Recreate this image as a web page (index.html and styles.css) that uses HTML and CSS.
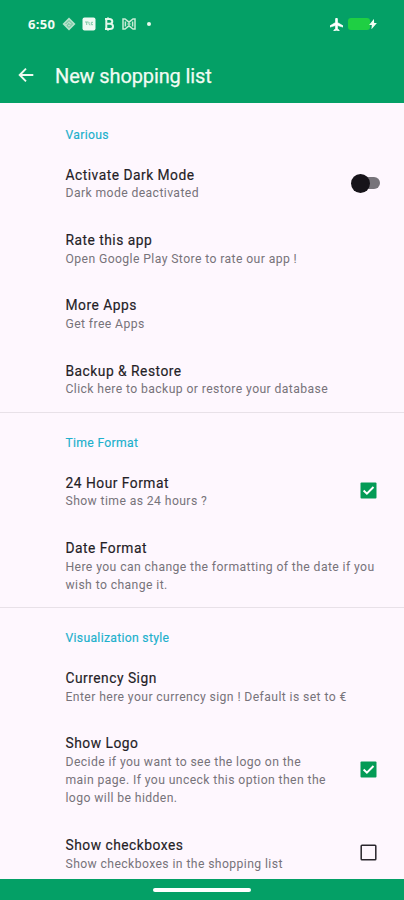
FILE: index.html
```
<!DOCTYPE html>
<html lang="en">
<head>
<meta charset="utf-8">
<title>New shopping list</title>
<link rel="stylesheet" href="styles.css">
</head>
<body>
<div class="screen">
  <header class="header">
    <div class="status">
      <span class="clock">6:50</span>
      <svg class="ic-diamond" width="14" height="14" viewBox="0 0 14 14"><path d="M7 .5 13.5 7 7 13.5 .5 7z" fill="#b5e2ca"/><path d="M3.500 7 7 3.500 10.500 7 7 10.500 5 8.500 7 6.600l1.300 1.300" fill="none" stroke="#4cb286" stroke-width=".8"/></svg>
      <svg class="ic-app" width="14" height="14" viewBox="0 0 14 14"><rect x=".5" y=".5" width="13" height="13" rx="2" fill="#effaf2"/><path d="M3 5h3.5M4.7 5v3M7 5v1.5q0 1.5 1.3 1.5M11 5.3H9.3v2.4H11" fill="none" stroke="#7fc9a5" stroke-width="1"/></svg>
      <svg class="ic-b" width="10" height="14" viewBox="0 0 10 14"><path d="M1 2h4.3Q8.3 2 8.3 4.5 8.3 6.4 6.3 6.8 9 7.2 9 9.5 9 12 5.8 12H1M2.3 2v10M3 6.8h3.3M4 .5V2M4 12v1.5" fill="none" stroke="#e4f7e9" stroke-width="2"/></svg>
      <svg class="ic-m" width="14" height="12" viewBox="0 0 14 12"><path d="M1 1h2l4 3.2L11 1h2v10h-2L7 7.8 3 11H1zM3.4 3.5v5M10.6 3.5v5M5.5 6h3" fill="none" stroke="#c8ecd5" stroke-width="1.500"/></svg>
      <span class="dot"></span>
      <svg class="ic-plane" width="13" height="13" viewBox="2 2 20 20"><path d="M22 16v-2l-8.500-5V3.500c0-.83-.67-1.500-1.500-1.500s-1.500.67-1.500 1.500V9L2 14v2l8.500-2.500V19L8 20.500V22l4-1 4 1v-1.500L13.500 19v-5.500z" fill="#fff" stroke="#fff" stroke-width="1"/></svg>
      <span class="battery"></span>
      <svg class="ic-bolt" width="8" height="10" viewBox="0 0 8 10"><path d="M4.400 1.500 1.300 5.500h2.200L3.200 8.500 6.600 4.500H4.600z" fill="#f1fff3" stroke="#f1fff3" stroke-width="1.200"/></svg>
    </div>
    <div class="appbar">
      <svg width="16" height="16" viewBox="0 0 16 16"><path d="M15.300 8H1.800M8 1.700 1.700 8 8 14.300" fill="none" stroke="#eefaf0" stroke-width="1.900"/></svg>
      <h1 class="title">New shopping list</h1>
    </div>
  </header>
  <main class="content">
    <section class="group">
      <h2 class="category">Various</h2>
      <div class="row"><div class="text"><div class="name">Activate Dark Mode</div><div class="summary">Dark mode deactivated</div></div><span class="switch"><span class="thumb"></span></span></div>
      <div class="row"><div class="text"><div class="name">Rate this app</div><div class="summary">Open Google Play Store to rate our app !</div></div></div>
      <div class="row"><div class="text"><div class="name">More Apps</div><div class="summary">Get free Apps</div></div></div>
      <div class="row"><div class="text"><div class="name">Backup &amp; Restore</div><div class="summary">Click here to backup or restore your database</div></div></div>
    </section>
    <section class="group">
      <h2 class="category">Time Format</h2>
      <div class="row"><div class="text"><div class="name">24 Hour Format</div><div class="summary">Show time as 24 hours ?</div></div><svg class="check" width="17" height="17" viewBox="0 0 17 17"><rect x=".5" y=".5" width="16" height="16" rx="1" fill="#049b56"/><path d="M3.600 8.500 6.900 11.700 13.500 5" fill="none" stroke="#fff" stroke-width="2"/></svg></div>
      <div class="row"><div class="text"><div class="name">Date Format</div><div class="summary">Here you can change the formatting of the date if you<br>wish to change it.</div></div></div>
    </section>
    <section class="group">
      <h2 class="category">Visualization style</h2>
      <div class="row"><div class="text"><div class="name">Currency Sign</div><div class="summary">Enter here your currency sign ! Default is set to €</div></div></div>
      <div class="row"><div class="text"><div class="name">Show Logo</div><div class="summary">Decide if you want to see the logo on the<br>main page. If you unceck this option then the<br>logo will be hidden.</div></div><svg class="check" width="17" height="17" viewBox="0 0 17 17"><rect x=".5" y=".5" width="16" height="16" rx="1" fill="#049b56"/><path d="M3.600 8.500 6.900 11.700 13.500 5" fill="none" stroke="#fff" stroke-width="2"/></svg></div>
      <div class="row"><div class="text"><div class="name">Show checkboxes</div><div class="summary">Show checkboxes in the shopping list</div></div><svg class="check" width="17" height="17" viewBox="0 0 17 17"><rect x="1.200" y="1.200" width="14.600" height="14.600" rx=".8" fill="none" stroke="#29262c" stroke-width="1.500"/></svg></div>
    </section>
  </main>
  <footer class="navbar"><span class="handle"></span></footer>
</div>
</body>
</html>
```
FILE: styles.css
```
* { box-sizing: border-box; }
body { margin: 0; font-family: Roboto, "Liberation Sans", sans-serif; }
.screen { width: 404px; height: 900px; display: flex; flex-direction: column; overflow: hidden; background: #fef7fe; }
.header { height: 103px; flex: none; background: #04a066; color: #f1fbf3; }
.status { height: 47px; display: flex; align-items: center; padding: 1px 27px 0 28px; }
.clock { width: 28px; font: 700 13px/16px "Open Sans", sans-serif; letter-spacing: 0.3px; white-space: nowrap; }
.ic-diamond { margin-left: 6px; }
.ic-app { margin-left: 6px; }
.ic-b { margin-left: 8px; }
.ic-m { margin-left: 8px; }
.dot { width: 4px; height: 4px; margin-left: 11px; border-radius: 50%; background: #e9f9ed; }
.ic-plane { margin-left: auto; }
.battery { width: 22px; height: 12px; margin-left: 5px; border-radius: 3px; background: #1fcf43; }
.ic-bolt { margin-left: -1px; }
.appbar { height: 56px; display: flex; align-items: center; padding: 0 18px; gap: 21px; }
.title { margin: 2px 0 0; font-size: 20px; font-weight: 400; line-height: 26px; letter-spacing: -0.13px; white-space: nowrap; -webkit-text-stroke: 0.25px currentColor; }
.content { flex: 1; min-height: 0; overflow: hidden; padding-top: 1px; }
.group + .group { border-top: 1px solid #e8e1e8; }
.group + .group .category { margin-top: -1px; }
.category { height: 46.500px; margin: 0; padding: 22px 0 0 65.500px; font-size: 12.200px; font-weight: 400; line-height: 19px; letter-spacing: 0.3px; color: #20b0cc; -webkit-text-stroke: 0.15px currentColor; }
.row { display: flex; align-items: center; justify-content: space-between; padding: 15.200px 27px 13.500px 65.500px; }
.text { white-space: nowrap; }
.name { font-size: 13.800px; line-height: 18.600px; letter-spacing: 0.5px; color: #242126; -webkit-text-stroke: 0.15px currentColor; }
.summary { font-size: 12.200px; line-height: 18.100px; letter-spacing: 0.4px; color: #77737a; }
.check { flex: none; margin-top: -3px; }
.switch { width: 25px; height: 12px; margin: -2px -3px 0 0; border-radius: 6px; background: #77747a; display: flex; align-items: center; }
.thumb { width: 19px; height: 19px; margin-left: -4px; border-radius: 50%; background: #17141a; flex: none; }
.navbar { height: 21px; flex: none; background: #04a066; display: flex; justify-content: center; align-items: center; }
.handle { width: 98px; height: 4px; border-radius: 2px; background: #fff; }
```
